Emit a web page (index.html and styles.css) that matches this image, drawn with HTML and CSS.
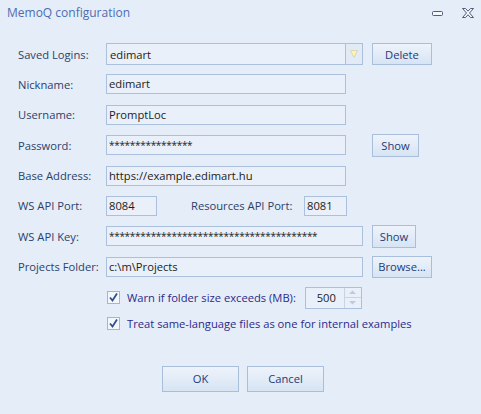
FILE: index.html
```html
<!DOCTYPE html>
<html lang="en">
<head>
  <meta charset="UTF-8" />
  <title>MemoQ configuration</title>
  <link rel="stylesheet" href="styles.css">
</head>
<body>
  <div class="window">
    <div class="titlebar">
      <span class="title">MemoQ configuration</span>
      <div class="win-buttons">
        <svg class="win-min" width="12" height="6" viewBox="0 0 12 6"><rect x="0.5" y="0.5" width="10" height="4" rx="1" fill="#f4f7fc" stroke="#505c78"/></svg>
        <svg class="win-close" width="12" height="10" viewBox="0 0 12 10"><path d="M0.5 0.5h3l2.5 2.7 2.5-2.7h3l-4 4.5 4 4.5h-3l-2.5-2.7-2.5 2.7h-3l4-4.5z" fill="#f4f7fc" stroke="#505c78" stroke-linejoin="round"/></svg>
      </div>
    </div>

    <div class="form">
      <label class="lbl">Saved Logins:</label>
      <div class="combo">
        <span class="combo-text">edimart</span>
        <span class="combo-btn">
          <svg width="8" height="10" viewBox="0 0 8 10"><path d="M0.5 1.5h7l-3.5 7z" fill="#fdf5a8" stroke="#d8d8b8"/></svg>
        </span>
      </div>
      <button class="btn btn-wide">Delete</button>

      <label class="lbl">Nickname:</label>
      <div class="field w-mid">edimart</div>
      <span></span>

      <label class="lbl">Username:</label>
      <div class="field w-mid">PromptLoc</div>
      <span></span>

      <label class="lbl">Password:</label>
      <div class="field w-mid mask">****************</div>
      <button class="btn btn-show btn-tall">Show</button>

      <label class="lbl">Base Address:</label>
      <div class="field w-mid">https://example.edimart.hu</div>
      <span></span>

      <label class="lbl">WS API Port:</label>
      <div class="ports">
        <div class="field w-port">8084</div>
        <label class="lbl lbl-res">Resources API Port:</label>
        <div class="field w-port2">8081</div>
      </div>
      <span></span>

      <label class="lbl">WS API Key:</label>
      <div class="field w-full mask">****************************************</div>
      <button class="btn btn-show2 btn-tall">Show</button>

      <label class="lbl">Projects Folder:</label>
      <div class="field w-full">c:\m\Projects</div>
      <button class="btn btn-wide">Browse...</button>
    </div>

    <div class="options">
      <div class="check-row">
        <span class="checkbox"><svg width="11" height="11" viewBox="0 0 11 11"><path d="M2 5.5l2.5 3 4.5-7" fill="none" stroke="#2f4f8f" stroke-width="1.8"/></svg></span>
        <span class="check-text">Warn if folder size exceeds (MB):</span>
        <div class="spinner">
          <span class="spin-val">500</span>
          <span class="spin-btns">
            <span class="spin-up"><svg width="7" height="4" viewBox="0 0 7 4"><path d="M0 4l3.5-3.5 3.5 3.5z" fill="#bfcbdc"/></svg></span>
            <span class="spin-down"><svg width="7" height="4" viewBox="0 0 7 4"><path d="M0 0l3.5 3.5 3.5-3.5z" fill="#bfcbdc"/></svg></span>
          </span>
        </div>
      </div>
      <div class="check-row">
        <span class="checkbox"><svg width="11" height="11" viewBox="0 0 11 11"><path d="M2 5.5l2.5 3 4.5-7" fill="none" stroke="#2f4f8f" stroke-width="1.8"/></svg></span>
        <span class="check-text">Treat same-language files as one for internal examples</span>
      </div>
    </div>

    <div class="footer">
      <button class="btn btn-dlg">OK</button>
      <button class="btn btn-dlg">Cancel</button>
    </div>
  </div>
</body>
</html>
```

FILE: styles.css
```css
html, body {
  margin: 0;
  padding: 0;
  height: 100%;
  overflow: hidden;
  background: #e5edf8;
  font-family: "Open Sans", "Noto Sans", sans-serif;
  font-size: 11.2px;
}

.window {
  width: 481px;
  height: 414px;
  display: flex;
  flex-direction: column;
}

.titlebar {
  height: 25px;
  display: flex;
  align-items: center;
  padding: 0 7px 0 7px;
}

.title {
  color: #4c6db0;
  font-size: 12px;
}

.win-buttons {
  margin-left: auto;
  display: flex;
  align-items: center;
  gap: 18px;
}

.win-min {
  margin-top: 3px;
}

.form {
  display: grid;
  grid-template-columns: 79px 257px 69px;
  column-gap: 9px;
  grid-auto-rows: 22px;
  row-gap: 8.4px;
  padding: 18px 0 0 18px;
  align-items: center;
}

.lbl {
  color: #2b416a;
  white-space: nowrap;
}

.field {
  box-sizing: border-box;
  height: 20px;
  border: 1px solid #aac0dd;
  background: #e9f0fa;
  color: #1c1c1c;
  padding: 0 6px 0 2px;
  line-height: 18px;
  white-space: nowrap;
  overflow: hidden;
}

.mask {
  font-size: 10px;
  letter-spacing: -0.3px;
}

.w-mid { width: 240px; }
.w-full { width: 257px; }
.w-port { width: 51px; }
.w-port2 { width: 43px; }

.ports {
  display: flex;
  align-items: center;
}

.lbl-res {
  margin-left: 34px;
  width: 113px;
}

.combo {
  box-sizing: border-box;
  height: 22px;
  border: 1px solid #aac0dd;
  background: #e9f0fa;
  display: flex;
  align-items: center;
}

.combo-text {
  flex: 1;
  padding-left: 3px;
  color: #1c1c1c;
}

.combo-btn {
  width: 16px;
  height: 20px;
  border-left: 1px solid #aac0dd;
  background: #e2eaf6;
  display: flex;
  align-items: center;
  justify-content: center;
}

.btn {
  box-sizing: border-box;
  height: 22px;
  border: 1px solid #a8bedb;
  background: linear-gradient(#eef3fb, #d7e4f4);
  color: #243a76;
  font-family: inherit;
  font-size: 11.2px;
  padding: 0;
  justify-self: start;
}

.btn-wide { width: 60px; }
.btn-show { width: 47px; }
.btn-show2 { width: 44px; }
.btn-tall { height: 23px; }

.options {
  display: flex;
  flex-direction: column;
  gap: 4px;
  padding: 9px 0 0 106px;
}

.check-row {
  display: flex;
  align-items: center;
  height: 22px;
}

.checkbox {
  box-sizing: border-box;
  width: 13px;
  height: 13px;
  border: 1px solid #a5b5cc;
  background: #f3f6fb;
  display: flex;
  align-items: center;
  justify-content: center;
  margin-left: 1px;
}

.check-text {
  margin-left: 7px;
  color: #2c2a8a;
}

.spinner {
  box-sizing: border-box;
  width: 57px;
  height: 22px;
  margin-left: 9px;
  border: 1px solid #aac0dd;
  background: #e9f0fa;
  display: flex;
}

.spin-val {
  flex: 1;
  text-align: right;
  padding-right: 8px;
  line-height: 20px;
  color: #1c1c1c;
}

.spin-btns {
  width: 16px;
  display: flex;
  flex-direction: column;
  border-left: 1px solid #c8d4e6;
}

.spin-up, .spin-down {
  flex: 1;
  display: flex;
  align-items: center;
  justify-content: center;
}

.spin-up {
  border-bottom: 1px solid #c8d4e6;
}

.footer {
  display: flex;
  justify-content: center;
  gap: 8px;
  padding: 31px 0 0 5px;
}

.btn-dlg {
  width: 77px;
  height: 26px;
}
```
